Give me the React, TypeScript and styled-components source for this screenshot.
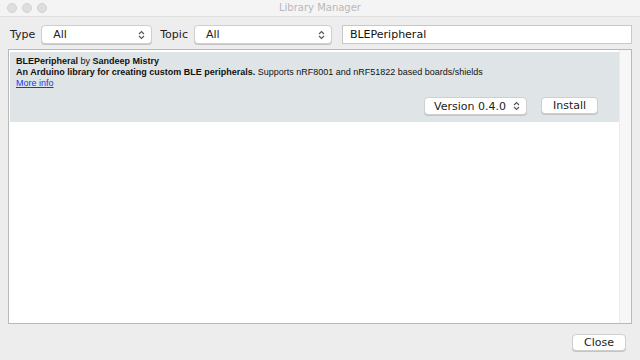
import styled, { createGlobalStyle } from 'styled-components';

const GlobalStyle = createGlobalStyle`
  html, body {
    margin: 0;
    padding: 0;
    width: 640px;
    height: 360px;
    overflow: hidden;
    background: #ececec;
    font-family: 'DejaVu Sans', 'Liberation Sans', sans-serif;
  }
`;

const Window = styled.div`
  width: 640px;
  height: 360px;
  display: flex;
  flex-direction: column;
  background: #ededed;
`;

const TitleBar = styled.div`
  height: 16px;
  display: flex;
  align-items: center;
  position: relative;
  background: #f4f4f4;
  border-bottom: 1px solid #e0e0e0;
  padding-left: 7px;
  gap: 5px;
`;

const Light = styled.span`
  width: 10px;
  height: 10px;
  border-radius: 50%;
  background: #dedede;
  border: 1px solid #d2d2d2;
  box-sizing: border-box;
`;

const Title = styled.div`
  position: absolute;
  left: 0;
  right: 0;
  top: 2px;
  text-align: center;
  font-size: 10px;
  color: #b8b8b8;
`;

const Toolbar = styled.div`
  display: flex;
  align-items: center;
  padding: 8px 8px 0 10px;
  height: 19px;
`;

const Label = styled.span`
  font-size: 11px;
  color: #222;
  margin-right: 6px;
`;

const Select = styled.div<{ $width: number }>`
  width: ${(p) => p.$width}px;
  height: 19px;
  box-sizing: border-box;
  background: #fff;
  border: 1px solid #cfcfcf;
  border-radius: 4px;
  box-shadow: 0 1px 0 #c4c4c4;
  display: flex;
  align-items: center;
  padding: 0 6px 0 11px;
  font-size: 11px;
  color: #222;
  margin-right: 8px;
`;

const SelectText = styled.span`
  flex: 1;
`;

const Arrows = () => (
  <svg width="7" height="10" viewBox="0 0 7 10">
    <path d="M1 4 L3.5 1.5 L6 4 M1 6 L3.5 8.5 L6 6" fill="none" stroke="#555" strokeWidth="1.1" />
  </svg>
);

const Search = styled.div`
  flex: 1;
  height: 19px;
  box-sizing: border-box;
  background: #fff;
  border: 1px solid #c8c8c8;
  display: flex;
  align-items: center;
  padding-left: 7px;
  font-size: 11px;
  color: #111;
  margin-left: 2px;
`;

const List = styled.div`
  margin: 5px 8px 0 8px;
  height: 275px;
  box-sizing: border-box;
  border: 1px solid #b9b9b9;
  background: #fff;
  display: flex;
  padding: 2px 0 0 1px;
`;

const Items = styled.div`
  flex: 1;
`;

const ScrollTrack = styled.div`
  width: 11px;
  margin-top: -2px;
  background: #f7f7f7;
  border-left: 1px solid #ececec;
`;

const Item = styled.div`
  height: 70px;
  background: #dfe5e6;
  padding: 4px 6px 0 6px;
  box-sizing: border-box;
  font-family: 'Liberation Sans', Arial, sans-serif;
  font-size: 9px;
  color: #111;
  line-height: 11px;
`;

const Strong = styled.b`
  font-weight: bold;
`;

const Link = styled.a`
  color: #1a36e8;
  text-decoration: underline;
`;

const ItemActions = styled.div`
  display: flex;
  justify-content: flex-end;
  gap: 14px;
  margin-top: 8px;
  padding-right: 15px;
  font-family: 'DejaVu Sans', sans-serif;
`;

const SmallSelect = styled(Select)`
  height: 18px;
  padding: 0 6px 0 9px;
  margin-right: 0;
`;

const Button = styled.div<{ $width: number }>`
  width: ${(p) => p.$width}px;
  height: 17px;
  box-sizing: border-box;
  background: #fff;
  border: 1px solid #cfcfcf;
  border-radius: 4px;
  box-shadow: 0 1px 0 #c4c4c4;
  display: flex;
  align-items: center;
  justify-content: center;
  font-size: 11px;
  color: #222;
`;

const Footer = styled.div`
  display: flex;
  justify-content: flex-end;
  padding: 10px 14px 0 0;
`;

export default function App() {
  return (
    <Window>
      <GlobalStyle />
      <TitleBar>
        <Light />
        <Light />
        <Light />
        <Title>Library Manager</Title>
      </TitleBar>
      <Toolbar>
        <Label>Type</Label>
        <Select $width={111}>
          <SelectText>All</SelectText>
          <Arrows />
        </Select>
        <Label>Topic</Label>
        <Select $width={138}>
          <SelectText>All</SelectText>
          <Arrows />
        </Select>
        <Search>BLEPeripheral</Search>
      </Toolbar>
      <List>
        <Items>
          <Item>
            <div>
              <Strong>BLEPeripheral</Strong> by <Strong>Sandeep Mistry</Strong>
            </div>
            <div>
              <Strong>An Arduino library for creating custom BLE peripherals.</Strong> Supports nRF8001 and
              nRF51822 based boards/shields
            </div>
            <div>
              <Link>More info</Link>
            </div>
            <ItemActions>
              <SmallSelect $width={103}>
                <SelectText>Version 0.4.0</SelectText>
                <Arrows />
              </SmallSelect>
              <Button $width={57}>Install</Button>
            </ItemActions>
          </Item>
        </Items>
        <ScrollTrack />
      </List>
      <Footer>
        <Button $width={54}>Close</Button>
      </Footer>
    </Window>
  );
}
